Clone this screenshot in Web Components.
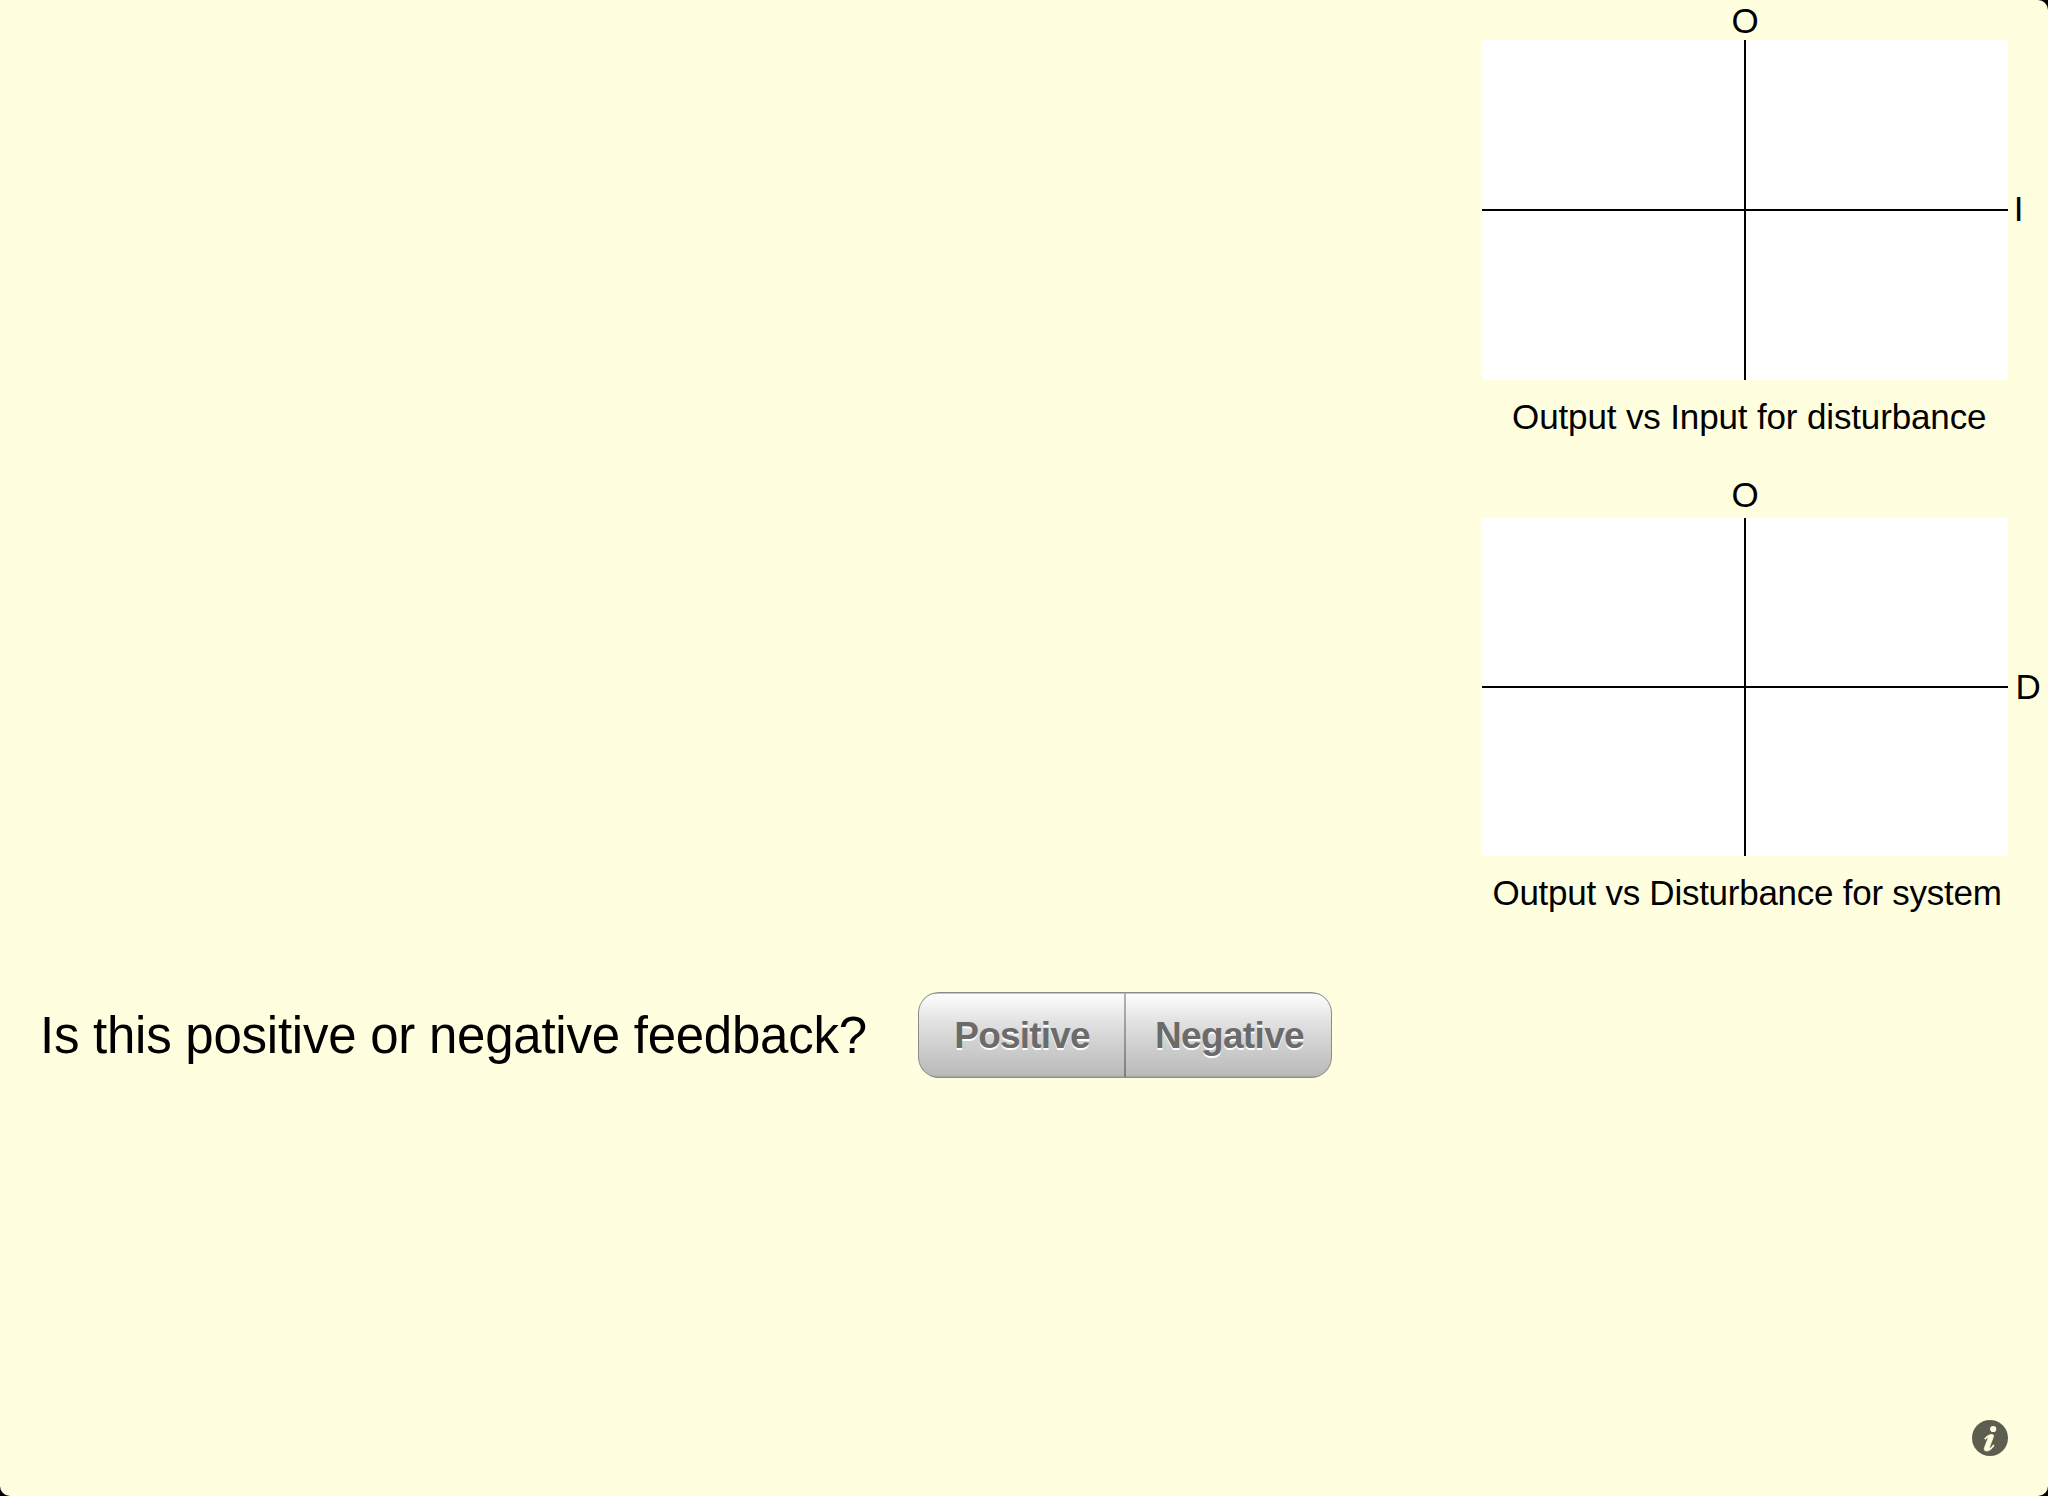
<!DOCTYPE html>
<html lang="en">
<head>
<meta charset="utf-8">
<title>Feedback</title>
<style>
html { background: #000; }
body { margin: 0; width: 2048px; height: 1496px; overflow: hidden; font-family: "Liberation Sans", Arial, sans-serif; color: #000; }
</style>
</head>
<body>
<feedback-screen>
  <axis-plot slot="plots" style="--plot-height:340px;--nudge:2px;--side:5.7px;--shift:8.5px;--tracking:-0.14px">
    <span slot="y">O</span><span slot="x">I</span><span slot="caption">Output vs Input for disturbance</span>
  </axis-plot>
  <axis-plot slot="plots" style="--plot-height:338px;--title-gap:4px;--side:7.5px;--shift:4px;--tracking:-0.26px">
    <span slot="y">O</span><span slot="x">D</span><span slot="caption">Output vs Disturbance for system</span>
  </axis-plot>
  <question-row slot="question">
    Is this positive or negative feedback?
    <segmented-control slot="control">
      <segment-button style="--w:207px;--sx:1px;--tracking:-0.8px">Positive</segment-button>
      <segment-button style="--w:205px;--sx:2px;--tracking:-0.65px">Negative</segment-button>
    </segmented-control>
  </question-row>
  <info-button slot="footer"></info-button>
</feedback-screen>
<script>
class BaseElement extends HTMLElement {
  constructor() {
    super();
    this.attachShadow({ mode: 'open' }).innerHTML = this.constructor.markup;
  }
}

class FeedbackScreen extends BaseElement {
  static markup = `
    <style>
      :host { display: flex; flex-direction: column; box-sizing: border-box; width: 2048px; height: 1496px;
        padding-top: 2px; background: #ffffe0; border-radius: 0 10px 10px 10px; overflow: hidden; }
      .plots { display: flex; flex-direction: column; align-items: flex-end; gap: 39px; }
      .question { margin-top: 79px; }
      footer { margin-top: auto; display: flex; justify-content: flex-end; padding: 0 40px 40px 0; }
    </style>
    <section class="plots"><slot name="plots"></slot></section>
    <section class="question"><slot name="question"></slot></section>
    <footer><slot name="footer"></slot></footer>`;
}

class AxisPlot extends BaseElement {
  static markup = `
    <style>
      :host { display: grid; grid-template-columns: 526px 40px; font-size: 35px; }
      .y { grid-column: 1; line-height: 38px; text-align: center; margin-bottom: var(--title-gap, 0px); }
      .plot { grid-column: 1; height: var(--plot-height); background:
        linear-gradient(#000, #000) 262px 0 / 2px 100% no-repeat,
        linear-gradient(#000, #000) 0 50% / 100% 2px no-repeat, #fff; }
      .x { align-self: center; line-height: 38px; padding: 0 0 var(--nudge, 0px) var(--side, 5px); }
      .caption { grid-column: 1; margin-top: 17px; line-height: 40px; text-align: center; white-space: nowrap;
        padding-left: var(--shift, 0px); letter-spacing: var(--tracking, 0px); }
    </style>
    <div class="y"><slot name="y"></slot></div>
    <div class="plot"></div>
    <div class="x"><slot name="x"></slot></div>
    <div class="caption"><slot name="caption"></slot></div>`;
}

class QuestionRow extends BaseElement {
  static markup = `
    <style>
      :host { display: flex; align-items: center; height: 86px; padding-left: 40px; }
      .text { width: 878px; padding-top: 2px; font-size: 51px; line-height: 58px; white-space: nowrap; letter-spacing: -0.25px; }
    </style>
    <div class="text"><slot></slot></div>
    <slot name="control"></slot>`;
}

class SegmentedControl extends BaseElement {
  static markup = `
    <style>
      :host { display: flex; box-sizing: border-box; width: 414px; height: 86px; padding: 1px;
        border-radius: 21px; background: #8b8b8b; }
      .track { display: flex; flex: 1; border-radius: 20px; overflow: hidden;
        background: linear-gradient(#c4c4c4 0, #c4c4c4 1px, #fdfdfd 1px, #e2e2e2 34%, #d1d1d1 60%, #bababa 98%, #a9a9a9 99%); }
    </style>
    <div class="track"><slot></slot></div>`;
}

class SegmentButton extends BaseElement {
  static markup = `
    <style>
      :host { display: flex; align-items: center; justify-content: center; box-sizing: border-box; width: var(--w);
        padding: 1px 0 0 var(--sx); font-size: 37px; font-weight: bold; letter-spacing: var(--tracking, 0px);
        color: #6b6b6b; text-shadow: 0 2px 0 #fff; }
      :host(:first-child) { border-right: 2px solid; border-image: linear-gradient(#b5b5b5, #7c7c7c) 1; }
    </style>
    <slot></slot>`;
}

class InfoButton extends BaseElement {
  static markup = `
    <style>:host { display: block; width: 36px; height: 36px; } svg { display: block; }</style>
    <svg width="36" height="36" viewBox="0 0 36 36">
      <circle cx="18" cy="18" r="18" fill="#5e5e50"/>
      <circle cx="21.2" cy="9" r="3.1" fill="#ffffe0"/>
      <path d="M12.6 18.7 C14.5 15.9 17 14.9 19.2 14.5 C21.5 14.1 21.9 15.4 21.2 17.3 L17.5 27.1 C17 28.6 17.8 28.5 18.8 27.7 C19.9 26.8 20.6 25.8 21.3 24.9 L22.1 25.6 C19.8 29.3 17.2 31 14.6 31 C12.2 31 11.8 29.6 12.7 27.1 L15.8 18.9 C16.4 17.2 15.9 17 14.8 17.9 L13.4 19.3 Z" fill="#ffffe0" stroke="#ffffe0" stroke-width="0.8" stroke-linejoin="round"/>
    </svg>`;
}

customElements.define('feedback-screen', FeedbackScreen);
customElements.define('axis-plot', AxisPlot);
customElements.define('question-row', QuestionRow);
customElements.define('segmented-control', SegmentedControl);
customElements.define('segment-button', SegmentButton);
customElements.define('info-button', InfoButton);
</script>
</body>
</html>
